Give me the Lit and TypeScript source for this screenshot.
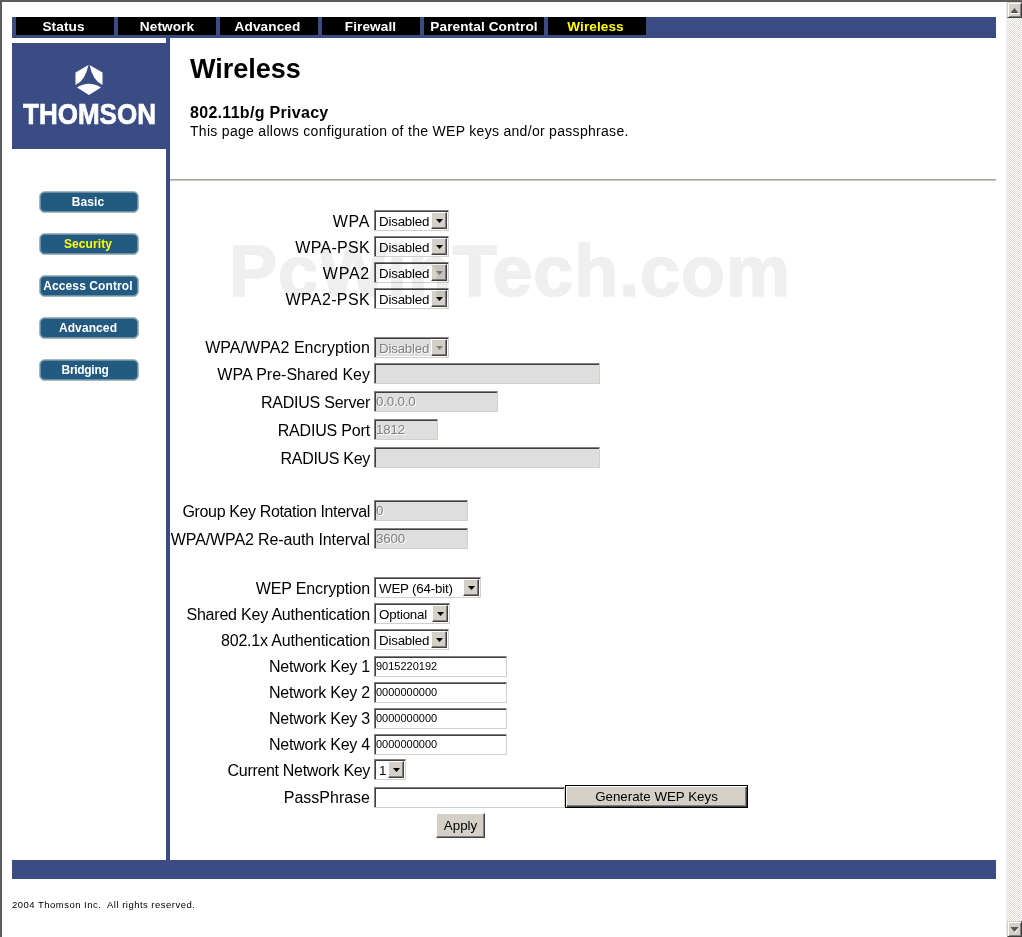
import { LitElement, html, css, svg } from "lit";
import { customElement, property } from "lit/decorators.js";

@customElement("win-select")
class WinSelect extends LitElement {
  @property() value = "";
  @property({ type: Number }) w = 75;
  @property({ type: Boolean }) disabled = false;
  @property({ type: Boolean }) dimarrow = false;
  static styles = css`
    :host { display: block; }
    .box {
      box-sizing: border-box; height: 21px; display: flex; align-items: center;
      background: #fff; border-style: solid; border-width: 1px;
      border-color: #808080 #d4d0c8 #d4d0c8 #808080;
      box-shadow: inset 1px 1px 0 #404040, inset -1px -1px 0 #fff;
      padding: 1px 1px 1px 4px;
      font: 13.33px "Liberation Sans", Arial, sans-serif; color: #000; letter-spacing: -0.2px;
    }
    .box.off { background: #dedede; color: #808080; text-shadow: 1px 1px 0 #fff; }
    .val { flex: 1; white-space: nowrap; overflow: hidden; padding-top: 2px; }
    .arrow {
      width: 16px; height: 17px; box-sizing: border-box; background: #d4d0c8;
      border-style: solid; border-width: 1px;
      border-color: #fff #404040 #404040 #fff;
      box-shadow: inset -1px -1px 0 #808080;
      display: flex; align-items: center; justify-content: center;
    }
    .tri { width: 7px; height: 4px; fill: #000; display: block; }
    .dim .tri, .off .tri { fill: #808080; }
  `;
  render() {
    const cls = `box ${this.disabled ? "off" : ""} ${this.dimarrow ? "dim" : ""}`;
    return html`<div class=${cls} style="width:${this.w}px">
      <span class="val">${this.value}</span>
      <span class="arrow"><svg class="tri" viewBox="0 0 7 4"><path d="M0 0H7L3.5 4Z" /></svg></span>
    </div>`;
  }
}

type Row = {
  label: string;
  kind: "sel" | "off" | "key";
  value: string;
  w: number;
  top: number;
  ls: number;
  disabled?: boolean;
  dim?: boolean;
};

const rows: Row[] = [
  { label: "WPA", kind: "sel", value: "Disabled", w: 75, top: 0, ls: 0.67 },
  { label: "WPA-PSK", kind: "sel", value: "Disabled", w: 75, top: 5, ls: 0.29 },
  { label: "WPA2", kind: "sel", value: "Disabled", w: 75, top: 5, ls: 0.75, dim: true },
  { label: "WPA2-PSK", kind: "sel", value: "Disabled", w: 75, top: 5, ls: 0.37 },
  { label: "WPA/WPA2 Encryption", kind: "sel", value: "Disabled", w: 75, top: 28, ls: 0.05, disabled: true },
  { label: "WPA Pre-Shared Key", kind: "off", value: "", w: 226, top: 5, ls: 0 },
  { label: "RADIUS Server", kind: "off", value: "0.0.0.0", w: 124, top: 7, ls: -0.23 },
  { label: "RADIUS Port", kind: "off", value: "1812", w: 64, top: 7, ls: -0.18 },
  { label: "RADIUS Key", kind: "off", value: "", w: 226, top: 7, ls: -0.3 },
  { label: "Group Key Rotation Interval", kind: "off", value: "0", w: 94, top: 32, ls: -0.37 },
  { label: "WPA/WPA2 Re-auth Interval", kind: "off", value: "3600", w: 94, top: 7, ls: -0.12 },
  { label: "WEP Encryption", kind: "sel", value: "WEP (64-bit)", w: 107, top: 28, ls: -0.14 },
  { label: "Shared Key Authentication", kind: "sel", value: "Optional", w: 76, top: 5, ls: -0.2 },
  { label: "802.1x Authentication", kind: "sel", value: "Disabled", w: 75, top: 5, ls: -0.19 },
  { label: "Network Key 1", kind: "key", value: "9015220192", w: 133, top: 6, ls: -0.23 },
  { label: "Network Key 2", kind: "key", value: "0000000000", w: 133, top: 5, ls: -0.23 },
  { label: "Network Key 3", kind: "key", value: "0000000000", w: 133, top: 5, ls: -0.23 },
  { label: "Network Key 4", kind: "key", value: "0000000000", w: 133, top: 5, ls: -0.23 },
  { label: "Current Network Key", kind: "sel", value: "1", w: 32, top: 4, ls: -0.32 },
];

const tabs = [
  { t: "Status", w: 98, pad: 3 },
  { t: "Network", w: 98, pad: 0 },
  { t: "Advanced", w: 98, pad: 3 },
  { t: "Firewall", w: 98, pad: 1 },
  { t: "Parental Control", w: 120, pad: 0 },
  { t: "Wireless", w: 98, pad: 3, on: true },
];
const side = ["Basic", "Security", "Access Control", "Advanced", "Bridging"];

@customElement("app-root")
class AppRoot extends LitElement {
  static styles = css`
    :host {
      display: block; width: 1022px; height: 937px; overflow: hidden; position: relative;
      background: #fff; font-family: "Liberation Sans", Arial, sans-serif; color: #000;
    }
    .win {
      box-sizing: border-box; width: 1022px; height: 937px; display: flex;
      border-top: 2px solid #5c5c5c; border-left: 2px solid #5c5c5c;
    }
    .page { flex: 1; padding: 15px 10px 0 10px; min-width: 0; }
    .nav { display: flex; gap: 4px; height: 18px; padding: 0 0 3px 4px; background: #3b4c84; }
    .tab {
      background: #000; color: #fff; font-weight: 700; font-size: 13.6px; letter-spacing: 0.1px;
      display: flex; align-items: center; justify-content: center; box-sizing: border-box;
    }
    .tab.on { color: #ffff00; }
    .body { display: flex; height: 822px; }
    .side { width: 154px; border-right: 4px solid #3b4c84; padding-top: 5px; flex: none; }
    .logo {
      height: 106px; background: #3b4c84; color: #fff; display: flex; flex-direction: column;
      align-items: center; padding-top: 22px; box-sizing: border-box;
    }
    .emblem { width: 28px; height: 30px; fill: #fff; display: block; flex: none; }
    .brand {
      font-size: 26px; line-height: 24px; font-weight: 700; margin-top: 7px;
      -webkit-text-stroke: 0.6px #fff; margin-left: 1px; transform: scaleY(1.1);
    }
    .menu { display: flex; flex-direction: column; gap: 20px; padding: 42px 0 0 27px; }
    .mbtn {
      box-sizing: border-box; width: 100px; height: 22px; border-radius: 6px;
      background: #235a82; border: 1px solid #a3b9bf; box-shadow: inset 0 0 0 1px #6a909f;
      color: #fff; font-size: 12px; font-weight: 700; display: flex; align-items: center;
      justify-content: center; padding: 0 2px 0 0; white-space: nowrap; letter-spacing: 0.1px;
    }
    .mbtn.on { color: #ffff00; }
    .mbtn.b { padding-right: 8px; letter-spacing: -0.3px; }
    .main { flex: 1; min-width: 0; }
    .head { padding: 16px 0 0 20px; height: 125px; box-sizing: border-box; }
    h1 { margin: 0; font-size: 27px; line-height: 30px; font-weight: 700; }
    h2 { margin: 20px 0 0; font-size: 16px; line-height: 17px; font-weight: 700; letter-spacing: 0.3px; }
    .desc { font-size: 14px; line-height: 17px; letter-spacing: 0.3px; padding-top: 2px; }
    hr { margin: 16px 0 0; border: 0; height: 2px; background: linear-gradient(#a8a59c 50%, #c9c7c0 50%); }
    .form { padding-top: 29px; display: flex; flex-direction: column; }
    .row { display: flex; align-items: center; height: 21px; gap: 4px; }
    .lab { width: 200px; text-align: right; font-size: 16px; white-space: nowrap; flex: none; padding-top: 2px; box-sizing: border-box; }
    .lab.flat { padding-top: 0; }
    input {
      box-sizing: border-box; height: 21px; margin: 0; padding: 0 1px 2px; display: block;
      border-style: solid; border-width: 1px; border-color: #808080 #d4d0c8 #d4d0c8 #808080;
      box-shadow: inset 1px 1px 0 #404040, inset -1px -1px 0 #fff;
      outline: none; border-radius: 0; background: #fff; color: #000;
      font-family: "Liberation Sans", Arial, sans-serif; font-size: 11px;
    }
    input.off {
      padding: 1px; background: #dedede; color: #808080; font-size: 13.33px; text-shadow: 1px 1px 0 #fff;
      box-shadow: inset 1px 1px 0 #404040, inset -1px -1px 0 #dedede; letter-spacing: -0.2px;
    }
    .pass { height: 23px; align-items: flex-end; margin-top: 5px; }
    .pass .lab { margin-bottom: 1px; padding-top: 0; }
    .pass .gap { display: flex; align-items: flex-end; }
    .btn {
      box-sizing: border-box; margin: 0; background: #d4d0c8; color: #000; border-radius: 0;
      font-family: "Liberation Sans", Arial, sans-serif; font-size: 13.33px; padding: 0;
      border-style: solid; border-width: 1px; border-color: #fff #404040 #404040 #fff;
      box-shadow: inset -1px -1px 0 #808080;
    }
    .gen { width: 183px; height: 23px; border: 1px solid #000; box-shadow: inset 1px 1px 0 #fff, inset -1px -1px 0 #404040, inset -2px -2px 0 #808080; }
    .applyrow { padding: 5px 0 0 266px; }
    .apply { width: 49px; height: 25px; display: block; }
    .foot { height: 19px; background: #3b4c84; }
    .copy { font-size: 9.5px; margin-top: 20px; line-height: 12px; letter-spacing: 0.48px; white-space: pre; }
    .bar {
      width: 16px; flex: none; display: flex; flex-direction: column; justify-content: space-between;
      background: conic-gradient(#dcd9d2 25%, #fff 0 50%, #dcd9d2 0 75%, #fff 0) 0 0 / 2px 2px;
    }
    .sbtn {
      box-sizing: border-box; width: 15px; height: 16px; background: #d4d0c8; margin-left: 1px;
      border-style: solid; border-width: 1px; border-color: #d4d0c8 #404040 #404040 #d4d0c8;
      box-shadow: inset 1px 1px 0 #fff, inset -1px -1px 0 #808080;
      display: flex; align-items: center; justify-content: center;
    }
    .sbtn svg { width: 9px; height: 7px; display: block; }
    .sh { fill: #fff; }
    .ar { fill: #555; }
    .mark {
      position: absolute; left: 229px; top: 234px; font-size: 72px; line-height: 74px; font-weight: 700;
      color: #efefef; -webkit-text-stroke: 1.6px #efefef; mix-blend-mode: multiply;
      pointer-events: none; white-space: nowrap; letter-spacing: 0.9px;
    }
  `;

  private field(r: Row) {
    if (r.kind === "sel") {
      return html`<win-select .value=${r.value} .w=${r.w} .disabled=${!!r.disabled} .dimarrow=${!!r.dim}></win-select>`;
    }
    if (r.kind === "off") {
      return html`<input class="off" disabled .value=${r.value} style="width:${r.w}px" />`;
    }
    return html`<input .value=${r.value} style="width:${r.w}px" />`;
  }

  render() {
    return html`
      <div class="win">
        <div class="page">
          <div class="nav">
            ${tabs.map((t) => html`<div class="tab ${t.on ? "on" : ""}" style="width:${t.w}px;padding-right:${t.pad}px">${t.t}</div>`)}
          </div>
          <div class="body">
            <div class="side">
              <div class="logo">
                <svg class="emblem" viewBox="0 0 28 30">
                  ${svg`<path d="M13.5 0 0.5 7.5V20Q10 16 13.5 0Z" /><path d="M14.5 0 27.5 7.5V20Q18 16 14.5 0Z" /><path d="M2 22.5Q14 15 26 22.5L14 30Z" />`}
                </svg>
                <div class="brand">THOMSON</div>
              </div>
              <div class="menu">
                ${side.map((s) => html`<div class="mbtn ${s === "Security" ? "on" : ""} ${s === "Bridging" ? "b" : ""}">${s}</div>`)}
              </div>
            </div>
            <div class="main">
              <div class="head">
                <h1>Wireless</h1>
                <h2>802.11b/g Privacy</h2>
                <div class="desc">This page allows configuration of the WEP keys and/or passphrase.</div>
              </div>
              <hr />
              <div class="form">
                ${rows.map((r) => html`<div class="row" style="margin-top:${r.top}px"><div class="lab ${r.kind === "key" || r.disabled ? "flat" : ""}" style="letter-spacing:${r.ls}px">${r.label}</div>${this.field(r)}</div>`)}
                <div class="row pass">
                  <div class="lab">PassPhrase</div>
                  <div class="gap"><input style="width:191px" /><button class="btn gen">Generate WEP Keys</button></div>
                </div>
                <div class="applyrow"><button class="btn apply">Apply</button></div>
              </div>
            </div>
          </div>
          <div class="foot"></div>
          <div class="copy">2004 Thomson Inc.  All rights reserved.</div>
        </div>
        <div class="bar">
          <div class="sbtn"><svg viewBox="0 0 9 7"><path class="sh" d="M0 6H9V7H0Z" /><path class="ar" d="M4.5 1 8.5 6H0.5Z" /></svg></div>
          <div class="sbtn"><svg viewBox="0 0 9 7"><path class="ar" d="M0.5 1H8.5L4.5 6Z" /><path class="sh" d="M4.5 6 8.5 2 8.5 3 5 7Z" /></svg></div>
        </div>
      </div>
      <div class="mark">PcWinTech.com</div>
    `;
  }
}
